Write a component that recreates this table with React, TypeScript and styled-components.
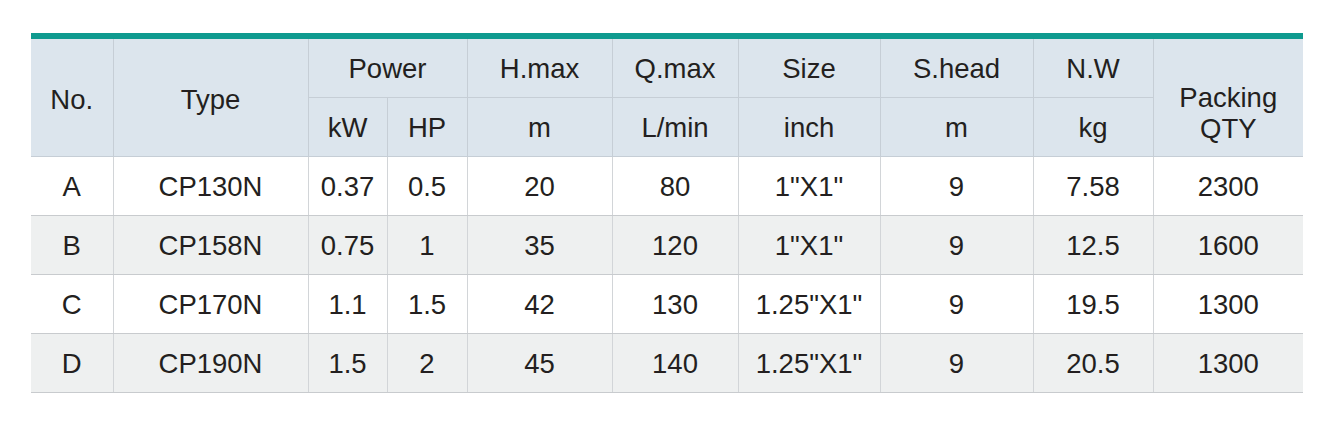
import React from "react";
import styled, { createGlobalStyle } from "styled-components";

const Global = createGlobalStyle`
  html, body { margin: 0; padding: 0; background: #ffffff; }
  body { font-family: "Liberation Sans", Arial, sans-serif; }
`;

const Page = styled.div`
  padding: 33px 37px 0 31px;
  width: 1272px;
`;

const Table = styled.table`
  width: 1272px;
  table-layout: fixed;
  border-collapse: collapse;
  border-top: 6px solid #0f9a8f;
  font-family: "Liberation Sans", Arial, sans-serif;
  font-size: 27.5px;
  color: #231f20;
`;

const HeadCell = styled.th<{ $first?: boolean; $shift?: number }>`
  background: #dce5ed;
  font-weight: normal;
  text-align: center;
  vertical-align: middle;
  height: 58px;
  padding: ${(p) => (p.$shift ? `${p.$shift}px 0 0 0` : "0")};
  line-height: 31px;
  border-bottom: 1px solid #c6ced6;
  border-left: ${(p) => (p.$first ? "none" : "1px solid #c6ced6")};
`;

const BodyRow = styled.tr<{ $alt: boolean }>`
  background: ${(p) => (p.$alt ? "#eef0f0" : "#ffffff")};
`;

const Cell = styled.td<{ $first?: boolean }>`
  text-align: center;
  vertical-align: middle;
  height: 57px;
  padding: 1px 0 0 0;
  border-bottom: 1px solid #c8cbce;
  border-left: ${(p) => (p.$first ? "none" : "1px solid #d2d5d8")};
`;

const widths = [82, 195, 79, 80, 145, 126, 142, 153, 120, 150];

const rows = [
  ["A", "CP130N", "0.37", "0.5", "20", "80", '1"X1"', "9", "7.58", "2300"],
  ["B", "CP158N", "0.75", "1", "35", "120", '1"X1"', "9", "12.5", "1600"],
  ["C", "CP170N", "1.1", "1.5", "42", "130", '1.25"X1"', "9", "19.5", "1300"],
  ["D", "CP190N", "1.5", "2", "45", "140", '1.25"X1"', "9", "20.5", "1300"],
];

export default function App() {
  return (
    <>
      <Global />
      <Page>
        <Table>
          <colgroup>
            {widths.map((w, i) => (
              <col key={i} style={{ width: w }} />
            ))}
          </colgroup>
          <thead>
            <tr>
              <HeadCell $first rowSpan={2} $shift={4}>No.</HeadCell>
              <HeadCell rowSpan={2} $shift={4}>Type</HeadCell>
              <HeadCell colSpan={2}>Power</HeadCell>
              <HeadCell>H.max</HeadCell>
              <HeadCell>Q.max</HeadCell>
              <HeadCell>Size</HeadCell>
              <HeadCell>S.head</HeadCell>
              <HeadCell>N.W</HeadCell>
              <HeadCell rowSpan={2} $shift={30}>
                Packing
                <br />
                QTY
              </HeadCell>
            </tr>
            <tr>
              <HeadCell>kW</HeadCell>
              <HeadCell>HP</HeadCell>
              <HeadCell>m</HeadCell>
              <HeadCell>L/min</HeadCell>
              <HeadCell>inch</HeadCell>
              <HeadCell>m</HeadCell>
              <HeadCell>kg</HeadCell>
            </tr>
          </thead>
          <tbody>
            {rows.map((r, i) => (
              <BodyRow key={i} $alt={i % 2 === 1}>
                {r.map((v, j) => (
                  <Cell key={j} $first={j === 0}>
                    {v}
                  </Cell>
                ))}
              </BodyRow>
            ))}
          </tbody>
        </Table>
      </Page>
    </>
  );
}
